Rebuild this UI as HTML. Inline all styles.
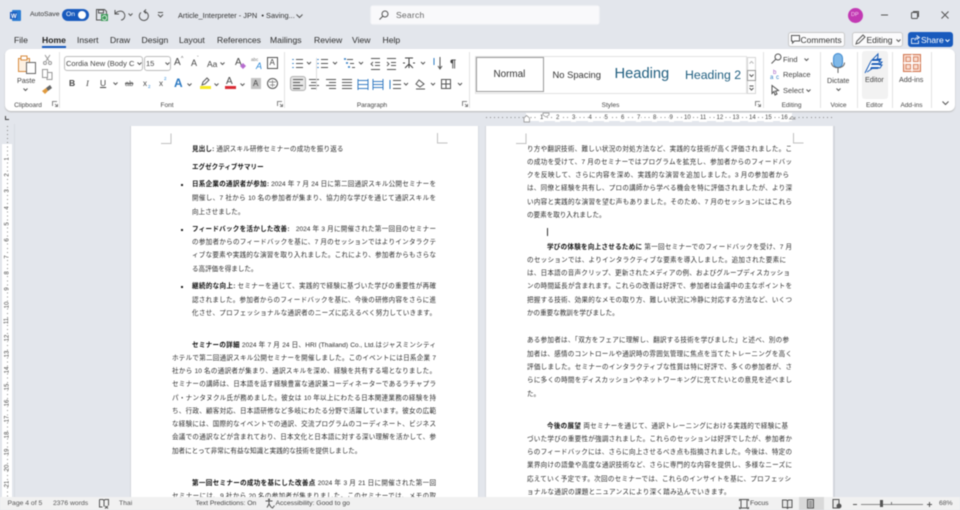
<!DOCTYPE html>
<html lang="ja"><head><meta charset="utf-8"><title>Word</title>
<style>
*{box-sizing:border-box}
html,body{margin:0;padding:0}
body{width:960px;height:510px;overflow:hidden;position:relative;background:#e3e6ec;font-family:"Liberation Sans","Noto Sans CJK JP",sans-serif;color:#333}
.a{position:absolute;white-space:nowrap;line-height:1}
#ui{position:absolute;left:0;top:0;width:960px;height:510px;filter:blur(.45px)}
.t{position:absolute;font-size:8.6px;top:35px;line-height:10px;color:#2e2e2e;white-space:nowrap}
.g{position:absolute;font-size:6.5px;top:101.5px;line-height:8px;color:#444;white-space:nowrap;transform:translateX(-50%)}
.sep{position:absolute;top:52px;height:56px;width:1px;background:#e2e2e2}
.page{position:absolute;top:126px;height:371px;width:347px;background:#fff}
.l{position:absolute;height:11px;line-height:11px;font-size:6.55px;color:#2a2a2a;overflow:hidden;text-align:left;margin-top:.5px;font-family:"Liberation Sans","Noto Sans CJK JP",sans-serif}
.j{text-align:justify;text-align-last:justify;text-justify:inter-character}
.L{left:172px;width:264px}.B{left:192px;width:244px}.R{left:527px;width:265px}
.l b{color:#111;font-weight:700}
svg{position:absolute;overflow:visible}
.dot{position:absolute;left:181px;width:2px;height:2px;background:#222}
.rn{position:absolute;font-size:6px;color:#444;line-height:6px;background:#fff}
#tr span{background:#fff;padding:0 1px;margin-left:-1px}
.s{fill:none;stroke:#555;stroke-width:1}
</style></head><body>
<div id="ui">
<!-- title bar -->
<svg style="left:10px;top:10px" width="11" height="11"><rect x="2" y="0" width="9" height="11" rx="1" fill="#2b7cd3"/><rect y="2" width="7" height="7" fill="#185abd"/><text x="1" y="8" font-size="6" font-weight="700" fill="#fff" font-family="Liberation Sans">W</text></svg>
<div class="a" style="left:30px;top:12px;font-size:6.8px;color:#333">AutoSave</div>
<div class="a" style="left:61.500px;top:8.500px;width:27px;height:12px;border-radius:6px;background:#185abd"></div>
<div class="a" style="left:66px;top:11.500px;font-size:6.800px;color:#fff">On</div>
<div class="a" style="left:78px;top:10.500px;width:8px;height:8px;border-radius:50%;background:#fff"></div>
<svg style="left:96px;top:9px" width="12" height="12"><path d="M.5.500h8l2 2v8.500h-10z" class="s"/><rect x="2.500" y="1" width="5" height="3" class="s"/><rect x="5" y="5" width="7" height="7" fill="#3d9a5a"/><path d="M6.500 8.500a2 2 0 0 1 4 0M10.500 8.500a2 2 0 0 1-4 1" stroke="#fff" fill="none" stroke-width=".8"/></svg>
<svg style="left:114px;top:9px" width="12" height="12"><path d="M1 1v4h4M1 5c2-3 7-4 9-1s0 7-3 7" class="s"/></svg>
<svg style="left:128px;top:13px" width="5" height="4"><path d="M.5.500 2.500 2.500 4.500.5" class="s"/></svg>
<svg style="left:138px;top:9px" width="11" height="12"><path d="M8 .5 6 2.500 8 4.500M6 2.500a4.500 4.500 0 1 1-3 1" class="s"/></svg>
<svg style="left:157px;top:12px" width="7" height="6"><path d="M1 .5h5M1 2.500 3.500 5 6 2.500" class="s"/></svg>
<div class="a" style="left:178px;top:11.500px;font-size:7.400px;color:#333">Article_Interpreter - JPN &nbsp;•&nbsp;Saving...</div>
<svg style="left:296px;top:13.500px" width="7" height="4"><path d="M.5.500 3.500 3.500 6.500.5" class="s"/></svg>
<div class="a" style="left:370px;top:5px;width:230px;height:20px;background:#f9f9fb;border:1px solid #eceef2;border-radius:3px"></div>
<svg style="left:379px;top:10px" width="10" height="10"><circle cx="6" cy="4" r="3" class="s"/><path d="M4 6 .5 9.500" class="s"/></svg>
<div class="a" style="left:396px;top:10.500px;font-size:8.600px;color:#666;letter-spacing:.2px">Search</div>
<div class="a" style="left:847.500px;top:7.500px;width:15px;height:15px;border-radius:50%;background:#c239b3"></div>
<div class="a" style="left:851px;top:12.500px;font-size:5.500px;color:#f6d5f2">DP</div>
<svg style="left:881px;top:10px" width="70" height="10"><path d="M0 5h7" stroke="#555"/><rect x="30.500" y="2.500" width="6" height="6" rx="1" class="s"/><path d="M32 1.500h5.500v5.500" class="s"/><path d="M60.500 1.500 67.500 8.500M67.500 1.500 60.500 8.500" class="s"/></svg>
<!-- tabs -->
<div class="t" style="left:14px">File</div>
<div class="t" style="left:42px;font-weight:700;color:#222">Home</div>
<div class="a" style="left:42px;top:46px;width:24px;height:1.500px;background:#185abd"></div>
<div class="t" style="left:77px">Insert</div>
<div class="t" style="left:110px">Draw</div>
<div class="t" style="left:141.500px">Design</div>
<div class="t" style="left:179px">Layout</div>
<div class="t" style="left:217px">References</div>
<div class="t" style="left:270px">Mailings</div>
<div class="t" style="left:314px">Review</div>
<div class="t" style="left:352px">View</div>
<div class="t" style="left:382.500px">Help</div>
<!-- right buttons -->
<div class="a" style="left:788px;top:32px;width:57px;height:15px;background:#fbfbfc;border:1px solid #c8c8c8;border-radius:3px"></div>
<svg style="left:791px;top:35px" width="9" height="9"><path d="M.5.500h8v5.500h-5l-2 2v-2h-1z" class="s"/></svg>
<div class="a" style="left:800.500px;top:35.500px;font-size:8.500px;color:#333">Comments</div>
<div class="a" style="left:852px;top:32px;width:51px;height:15px;background:#fbfbfc;border:1px solid #c8c8c8;border-radius:3px"></div>
<svg style="left:855px;top:34px" width="11" height="11"><path d="M1 10 2 7 8 1l2 2-6 6z" class="s"/></svg>
<div class="a" style="left:866.500px;top:35.500px;font-size:8.500px;color:#333">Editing</div>
<svg style="left:896px;top:39px" width="5" height="3"><path d="M.5.500 2.500 2.500 4.500.5" class="s"/></svg>
<div class="a" style="left:908px;top:32px;width:44.500px;height:15px;background:#185abd;border-radius:3px"></div>
<svg style="left:911px;top:35px" width="9" height="9"><path d="M.5 3.500h3M.5 3.500v5h7v-3M4 5.500c0-2 1-3 3-3M5.500 .5l3 2-3 2" stroke="#fff" fill="none" stroke-width=".8"/></svg>
<div class="a" style="left:921px;top:35.500px;font-size:8.500px;color:#fff">Share</div>
<svg style="left:945px;top:39px" width="5" height="3"><path d="M.5.500 2.500 2.500 4.500.5" stroke="#fff" fill="none"/></svg>
<!-- ribbon -->
<div class="a" style="left:5px;top:49px;width:950px;height:62px;background:#fff;border-radius:6px;box-shadow:0 1px 1.500px #b8b8b8"></div>
<div class="sep" style="left:59px"></div><div class="sep" style="left:284px"></div><div class="sep" style="left:469px"></div><div class="sep" style="left:763px"></div><div class="sep" style="left:820px"></div><div class="sep" style="left:857px"></div><div class="sep" style="left:892px"></div><div class="sep" style="left:931px"></div>
<!-- clipboard -->
<svg style="left:18px;top:55px" width="19" height="19"><rect x=".5" y="3.500" width="11" height="13" fill="#fdf1e3" stroke="#d88b3c"/><rect x="3" y="1" width="6" height="4" fill="#fff" stroke="#d88b3c"/><rect x="8.500" y="7.500" width="9" height="11" fill="#fff" stroke="#666"/></svg>
<div class="a" style="left:17px;top:77px;font-size:7.200px;color:#444">Paste</div>
<svg style="left:23px;top:88px" width="5" height="3"><path d="M.5.500 2.500 2.500 4.500.5" class="s"/></svg>
<svg style="left:43px;top:54px" width="9" height="11"><path d="M2 1 6 7M7 1 3 7" stroke="#999" fill="none"/><circle cx="2" cy="9" r="1.500" class="s" style="stroke:#999"/><circle cx="7" cy="9" r="1.500" class="s" style="stroke:#999"/></svg>
<svg style="left:42px;top:69px" width="11" height="11"><path d="M.5.500h5v8h-5zM5.500 3.500h4.500v7h-5v-2" fill="none" stroke="#999"/></svg>
<svg style="left:42px;top:84px" width="11" height="11"><path d="M4 4 8 1l2 3-4 3z" fill="#666"/><path d="M4 4 6 7 3 10 0 7z" fill="#e09a3e"/></svg>
<div class="g" style="left:28px">Clipboard</div>
<svg style="left:52px;top:101px" width="6" height="6"><path d="M.5 5V.5H5M3 3l2.500 2.500M5.500 3v2.500H3" fill="none" stroke="#666" stroke-width=".8"/></svg>
<!-- font -->
<div class="a" style="left:64px;top:56px;width:79px;height:15px;border:1px solid #bdbdbd;border-radius:3px"></div>
<div class="a" style="left:66px;top:60px;font-size:7.500px;color:#444">Cordia New (Body C</div>
<svg style="left:137px;top:62px" width="5" height="3"><path d="M.5.500 2.500 2.500 4.500.5" class="s"/></svg>
<div class="a" style="left:144px;top:56px;width:27px;height:15px;border:1px solid #bdbdbd;border-radius:3px"></div>
<div class="a" style="left:146px;top:60px;font-size:7.500px;color:#444">15</div>
<svg style="left:165px;top:62px" width="5" height="3"><path d="M.5.500 2.500 2.500 4.500.5" class="s"/></svg>
<div class="a" style="left:174px;top:58px;font-size:10px;color:#444">A</div><div class="a" style="left:181px;top:57px;font-size:5px;color:#555">^</div>
<div class="a" style="left:191px;top:59px;font-size:9px;color:#444">A</div><div class="a" style="left:197px;top:57px;font-size:5px;color:#555">ˇ</div>
<div class="a" style="left:207px;top:59.500px;font-size:8.500px;color:#444">Aa</div>
<svg style="left:220px;top:62px" width="5" height="3"><path d="M.5.500 2.500 2.500 4.500.5" class="s"/></svg>
<div class="a" style="left:235px;top:58px;font-size:10px;color:#444">A</div>
<svg style="left:240px;top:63px" width="6" height="6"><path d="M0 3 3 0l3 3-3 3z" fill="#b66ccf"/></svg>
<div class="a" style="left:251px;top:58px;font-size:4.500px;color:#777">abc</div><div class="a" style="left:256px;top:62px;font-size:9px;color:#2b88d8;font-style:italic">A</div>
<div class="a" style="left:267px;top:57px;width:11px;height:12px;border:1px solid #555"></div><div class="a" style="left:269.500px;top:59px;font-size:8px;color:#444">A</div>
<div class="a" style="left:69px;top:79px;font-size:8.500px;font-weight:700;color:#444">B</div>
<div class="a" style="left:86px;top:79px;font-size:8.500px;font-style:italic;font-family:'Liberation Serif';color:#444">I</div>
<div class="a" style="left:100px;top:79px;font-size:8.500px;text-decoration:underline;color:#444">U</div>
<svg style="left:113px;top:82px" width="5" height="3"><path d="M.5.500 2.500 2.500 4.500.5" class="s"/></svg>
<div class="a" style="left:125px;top:80px;font-size:7.500px;text-decoration:line-through;color:#555">ab</div>
<div class="a" style="left:143px;top:80px;font-size:8px;color:#444">x</div><div class="a" style="left:148px;top:85px;font-size:4.500px;color:#2b88d8">2</div>
<div class="a" style="left:159px;top:80px;font-size:8px;color:#444">x</div><div class="a" style="left:164px;top:77px;font-size:4.500px;color:#2b88d8">2</div>
<div class="a" style="left:174px;top:77px;font-size:12px;font-weight:700;color:#2b79c2">A</div>
<svg style="left:187px;top:83px" width="5" height="3"><path d="M.5.500 2.500 2.500 4.500.5" class="s"/></svg>
<svg style="left:201px;top:77px" width="10" height="9"><path d="M1 8 2 5 6 1l2 2-4 4z" class="s"/></svg>
<div class="a" style="left:200px;top:86px;width:10.500px;height:3px;background:#f6e925"></div>
<svg style="left:214px;top:83px" width="5" height="3"><path d="M.5.500 2.500 2.500 4.500.5" class="s"/></svg>
<div class="a" style="left:226px;top:77px;font-size:10px;color:#444">A</div>
<div class="a" style="left:225px;top:86px;width:11px;height:3px;background:#d92b35"></div>
<svg style="left:240px;top:83px" width="5" height="3"><path d="M.5.500 2.500 2.500 4.500.5" class="s"/></svg>
<div class="a" style="left:251px;top:78px;width:10px;height:11px;background:#c4c4c4"></div><div class="a" style="left:253px;top:80px;font-size:8px;color:#444">A</div>
<svg style="left:267px;top:78px" width="11" height="11"><circle cx="5.500" cy="5.500" r="5" class="s"/><path d="M2 4h7M5.500 2v7M3 7h5" stroke="#777" fill="none" stroke-width=".7"/></svg>
<div class="g" style="left:167px">Font</div>
<svg style="left:277px;top:101px" width="6" height="6"><path d="M.5 5V.5H5M3 3l2.500 2.500M5.500 3v2.500H3" fill="none" stroke="#666" stroke-width=".8"/></svg>
<!-- paragraph -->
<svg style="left:290px;top:56px" width="180" height="36" stroke="#555" fill="none">
<path d="M3 3v1M3 7v1M3 11v1" stroke="#2b79c2" stroke-width="1.500"/><path d="M6 3.500h7M6 7.500h7M6 11.500h7"/><path d="M17 6l2 2 2-2"/>
<path d="M28 3v1M28 7v1M28 11v1" stroke="#2b79c2" stroke-width="1.500"/><path d="M31 3.500h7M31 7.500h7M31 11.500h7"/><path d="M43 6l2 2 2-2"/>
<path d="M54 3h2M56 7h2M58 11h2" stroke="#2b79c2" stroke-width="1.500"/><path d="M57 3.500h6M60 7.500h4M62 11.500h3"/><path d="M69 6l2 2 2-2"/>
<path d="M81 2.500h9M85 6.500h5M85 9.500h5M81 13.500h9M83 6l-2 2 2 2" stroke-width=".9"/>
<path d="M97 2.500h9M101 6.500h5M101 9.500h5M97 13.500h9M97 6l2 2-2 2" stroke-width=".9"/>
<path d="M115 2l8 0M119 2v10M115 12l4-4 4 4M113 7h2M123 7h2" stroke="#444"/><path d="M131 6l2 2 2-2"/>
<path d="M144 2v7M144 11v0" stroke="#2b79c2"/><path d="M150 1v11M148 10l2 3 2-3"/>
<text x="160" y="11" font-size="11" fill="#444" stroke="none" font-family="Liberation Sans" font-weight="700">¶</text>
</svg>
<div class="a" style="left:289.500px;top:76px;width:16px;height:15px;background:#e6e6e6;border:1px solid #b0b0b0;border-radius:3px"></div>
<svg style="left:292px;top:78px" width="180" height="14" stroke="#555" fill="none">
<path d="M1 1.500h10M1 4.500h7M1 7.500h10M1 10.500h7"/>
<path d="M17 1.500h10M19 4.500h6M17 7.500h10M19 10.500h6"/>
<path d="M34 1.500h10M37 4.500h7M34 7.500h10M37 10.500h7"/>
<path d="M50 1.500h10M50 4.500h10M50 7.500h10M50 10.500h10"/>
<path d="M66 1v11M76 1v11M66 2.500h10M66 6.500h10M66 10.500h10" stroke="#3a7fc4"/>
<path d="M81 1v11M91 1v11M81 3.500h10M81 6.500h10M81 9.500h10" stroke="#3a7fc4"/>
<path d="M98 2v9" stroke="#2b79c2"/><path d="M101 2.500h8M101 6.500h8M101 10.500h8"/><path d="M112 5l2 2 2-2"/>
<path d="M127 2l5 4-4 3-4-3zM124 11h9" stroke="#555"/><path d="M139 5l2 2 2-2"/>
<rect x="149.500" y="1.500" width="9" height="9"/><path d="M154 1.500v9M149.500 6h9"/><path d="M166 5l2 2 2-2"/>
</svg>
<div class="a" style="left:316px;top:58px;width:1px;height:32px;background:#ddd"></div>
<div class="g" style="left:372px">Paragraph</div>
<svg style="left:462px;top:101px" width="6" height="6"><path d="M.5 5V.5H5M3 3l2.500 2.500M5.500 3v2.500H3" fill="none" stroke="#666" stroke-width=".8"/></svg>
<!-- styles -->
<div class="a" style="left:475px;top:56px;width:272px;height:38px;border:1px solid #e2e2e2;background:#fff"></div>
<div class="a" style="left:476px;top:57px;width:68px;height:35px;border:1px solid #9a9a9a"></div>
<div class="a" style="left:493.500px;top:70px;font-size:9.900px;color:#333">Normal</div>
<div class="a" style="left:552.500px;top:70px;font-size:9.400px;color:#333">No Spacing</div>
<div class="a" style="left:614.500px;top:67px;font-size:14.700px;color:#215f80">Heading</div>
<div class="a" style="left:685px;top:68.500px;font-size:12.300px;color:#215f80">Heading 2</div>
<div class="a" style="left:747px;top:57px;width:9px;height:37px;border:1px solid #d6d6d6;background:#fff"></div>
<div class="a" style="left:747px;top:70px;width:9px;height:11px;border:1px solid #9a9a9a;background:#fff"></div>
<svg style="left:749px;top:61px" width="5" height="30"><path d="M.5 2.500 2.500.5 4.500 2.500" stroke="#bbb" fill="none"/><path d="M.5 13.500 2.500 15.500 4.500 13.500" class="s"/><path d="M.5 25h4M.5 27 2.500 29 4.500 27" class="s"/></svg>
<div class="g" style="left:610.500px">Styles</div>
<svg style="left:755px;top:101px" width="6" height="6"><path d="M.5 5V.5H5M3 3l2.500 2.500M5.500 3v2.500H3" fill="none" stroke="#666" stroke-width=".8"/></svg>
<!-- editing -->
<svg style="left:771px;top:53px" width="11" height="11"><circle cx="7" cy="4" r="3" class="s"/><path d="M5 6 .5 10.500" class="s"/></svg>
<div class="a" style="left:783px;top:55.500px;font-size:7.500px;color:#444">Find</div>
<svg style="left:804px;top:58px" width="5" height="3"><path d="M.5.500 2.500 2.500 4.500.5" class="s"/></svg>
<svg style="left:770px;top:69px" width="11" height="11"><text x="3" y="5" font-size="6" fill="#a45bc4" font-family="Liberation Sans">b</text><text x="0" y="10" font-size="6" fill="#2b79c2" font-family="Liberation Sans">a</text><text x="6" y="10" font-size="6" fill="#2b79c2" font-family="Liberation Sans">c</text></svg>
<div class="a" style="left:783px;top:71px;font-size:7.500px;color:#444">Replace</div>
<svg style="left:771px;top:85px" width="9" height="11"><path d="M1 .5v8l2-2 1 3.500 2-1-1.500-3 3-.5z" class="s"/></svg>
<div class="a" style="left:783px;top:87px;font-size:7.500px;color:#444">Select</div>
<svg style="left:806px;top:89px" width="5" height="3"><path d="M.5.500 2.500 2.500 4.500.5" class="s"/></svg>
<div class="g" style="left:791.500px">Editing</div>
<!-- dictate -->
<svg style="left:830px;top:53px" width="16" height="20"><rect x="3.500" y=".5" width="9" height="14" rx="4.500" fill="#7fb8e8" stroke="#3f8ad0"/><path d="M1.500 9.500c0 7 13 7 13 0M8 15v5" stroke="#666" fill="none"/></svg>
<div class="a" style="left:827px;top:77px;font-size:7.200px;color:#444">Dictate</div>
<svg style="left:836px;top:88px" width="5" height="3"><path d="M.5.500 2.500 2.500 4.500.5" class="s"/></svg>
<div class="g" style="left:838.500px">Voice</div>
<!-- editor -->
<div class="a" style="left:862px;top:51px;width:26px;height:48px;background:#f2f2f2;border-radius:3px"></div>
<svg style="left:864px;top:53px" width="22" height="21"><path d="M1 20 7 8 14 1c0 3 0 4-1 5h4l-2 3h3l-2 3h2l-2 3H9L3 19" fill="#fff" stroke="#1d5fb8"/><path d="M9 6h8l-1 2H8zM8 10h9l-1 2H7zM7 14h8l-1 2H6z" fill="#1d5fb8"/></svg>
<div class="a" style="left:865px;top:76px;font-size:7.200px;color:#444">Editor</div>
<div class="g" style="left:874.500px">Editor</div>
<!-- addins -->
<svg style="left:903px;top:54px" width="18" height="18"><rect x=".5" y=".5" width="17" height="17" fill="#f9ddd1" stroke="#d0734c"/><path d="M9 .5v17M.5 9h17" stroke="#fff" stroke-width="1.500"/><path d="M3 3h4.500v4.500H3zM10.500 3H15v4.500h-4.500zM3 10.500h4.500V15H3zM10.500 10.500H15V15h-4.500z" fill="none" stroke="#d0734c" stroke-width=".8"/></svg>
<div class="a" style="left:899px;top:76px;font-size:7.200px;color:#444">Add-ins</div>
<div class="g" style="left:911.500px">Add-ins</div>
<svg style="left:942px;top:101px" width="7" height="4"><path d="M.5.500 3.500 3.500 6.500.5" class="s"/></svg>

<!-- doc area -->
<div class="a" style="left:14px;top:113px;width:946px;height:384px;background:#e3e6ec"></div>
<div class="a" style="left:14px;top:124px;width:1px;height:373px;background:#d8dbe1"></div>
<div class="page" style="left:131px"></div>
<div class="page" style="left:486px"></div>
<div class="a" style="left:129.500px;top:126px;width:1.500px;height:371px;background:#d3d6dc"></div>
<div class="a" style="left:478px;top:126px;width:1px;height:371px;background:#d8dbe1"></div>
<div class="a" style="left:485px;top:126px;width:1px;height:371px;background:#d3d6dc"></div>
<div class="a" style="left:833px;top:126px;width:1.500px;height:371px;background:#d3d6dc"></div>
<!-- crop marks -->
<svg style="left:0;top:0" width="960" height="510" stroke="#c0c0c0" fill="none"><path d="M161 143.500h10v-10M437.500 133v10h10M516 143.500h10v-10M793.500 133v10h10"/></svg>
<!-- top ruler -->
<div class="a" style="left:526px;top:113px;width:266px;height:7.500px;background:#fff"></div>
<div class="a" style="left:486px;top:117px;width:347px;height:1px;background:repeating-linear-gradient(90deg,#888 0 1px,transparent 1px 4.060px)"></div>
<div class="a" style="left:526px;top:114px;width:266px;height:8px;font-size:6px;line-height:8px;color:#444" id="tr">
<span class="a" style="left:14px;top:0;line-height:8px">1</span><span class="a" style="left:30px;top:0;line-height:8px">2</span><span class="a" style="left:46px;top:0;line-height:8px">3</span><span class="a" style="left:62.500px;top:0;line-height:8px">4</span><span class="a" style="left:78.500px;top:0;line-height:8px">5</span><span class="a" style="left:95px;top:0;line-height:8px">6</span><span class="a" style="left:111px;top:0;line-height:8px">7</span><span class="a" style="left:127px;top:0;line-height:8px">8</span><span class="a" style="left:143.500px;top:0;line-height:8px">9</span><span class="a" style="left:158px;top:0;line-height:8px">10</span><span class="a" style="left:174px;top:0;line-height:8px">11</span><span class="a" style="left:190.500px;top:0;line-height:8px">12</span><span class="a" style="left:206.500px;top:0;line-height:8px">13</span><span class="a" style="left:223px;top:0;line-height:8px">14</span><span class="a" style="left:239px;top:0;line-height:8px">15</span><span class="a" style="left:255px;top:0;line-height:8px">16</span>
</div>
<svg style="left:0;top:0" width="960" height="510" fill="#fff" stroke="#888" stroke-width=".7"><path d="M524 118l2.500-2.500 3 2.500v4h-5.500zM543 113h6v2l-3 2-3-2zM789.500 119l2.500-2.500 3 2.500z"/></svg>
<!-- vertical ruler -->
<div class="a" style="left:2px;top:144px;width:10px;height:353px;background:#fff"></div>
<div class="a" style="left:5px;top:116px;width:4px;height:4px;border-left:1.500px solid #444;border-bottom:1.500px solid #444"></div>
<div class="a" style="left:7px;top:126px;width:1px;height:371px;background:repeating-linear-gradient(180deg,#888 0 1px,transparent 1px 4.060px)"></div>
<div style="position:absolute;left:3px;top:0;width:9px;height:497px;overflow:hidden" id="vr">
<span class="rn" style="left:2.500px;top:156px;transform:rotate(-90deg)">1</span><span class="rn" style="left:2.500px;top:172px;transform:rotate(-90deg)">2</span><span class="rn" style="left:2.500px;top:188px;transform:rotate(-90deg)">3</span><span class="rn" style="left:2.500px;top:205px;transform:rotate(-90deg)">4</span><span class="rn" style="left:2.500px;top:221px;transform:rotate(-90deg)">5</span><span class="rn" style="left:2.500px;top:237px;transform:rotate(-90deg)">6</span><span class="rn" style="left:2.500px;top:254px;transform:rotate(-90deg)">7</span><span class="rn" style="left:2.500px;top:270px;transform:rotate(-90deg)">8</span><span class="rn" style="left:2.500px;top:286px;transform:rotate(-90deg)">9</span><span class="rn" style="left:1px;top:302px;transform:rotate(-90deg)">10</span><span class="rn" style="left:1px;top:318px;transform:rotate(-90deg)">11</span><span class="rn" style="left:1px;top:335px;transform:rotate(-90deg)">12</span><span class="rn" style="left:1px;top:351px;transform:rotate(-90deg)">13</span><span class="rn" style="left:1px;top:367px;transform:rotate(-90deg)">14</span><span class="rn" style="left:1px;top:384px;transform:rotate(-90deg)">15</span><span class="rn" style="left:1px;top:400px;transform:rotate(-90deg)">16</span><span class="rn" style="left:1px;top:416px;transform:rotate(-90deg)">17</span><span class="rn" style="left:1px;top:432px;transform:rotate(-90deg)">18</span><span class="rn" style="left:1px;top:449px;transform:rotate(-90deg)">19</span><span class="rn" style="left:1px;top:465px;transform:rotate(-90deg)">20</span><span class="rn" style="left:1px;top:481px;transform:rotate(-90deg)">21</span>
</div>

<!-- left page text -->
<div class="l" style="left:192px;width:244px;top:143.500px;letter-spacing:.15px"><b>見出し:</b> 通訳スキル研修セミナーの成功を振り返る</div>
<div class="l" style="left:192px;width:244px;top:161.500px"><b>エグゼクティブサマリー</b></div>
<div class="dot" style="top:184px"></div>
<div class="l B j" style="top:178.500px"><b>日系企業の通訳者が参加:</b> 2024 年 7 月 24 日に第二回通訳スキル公開セミナーを</div>
<div class="l B j" style="top:192.500px">開催し、7 社から 10 名の参加者が集まり、協力的な学びを通じて通訳スキルを</div>
<div class="l B" style="top:206px">向上させました。</div>
<div class="dot" style="top:229px"></div>
<div class="l B j" style="top:223.500px"><b>フィードバックを活かした改善:</b> &nbsp; 2024 年 3 月に開催された第一回目のセミナー</div>
<div class="l B j" style="top:236.500px">の参加者からのフィードバックを基に、7 月のセッションではよりインタラクテ</div>
<div class="l B j" style="top:249.500px">ィブな要素や実践的な演習を取り入れました。これにより、参加者からもさらな</div>
<div class="l B" style="top:263px">る高評価を得ました。</div>
<div class="dot" style="top:286px"></div>
<div class="l B j" style="top:280.500px"><b>継続的な向上:</b> セミナーを通じて、実践的で経験に基づいた学びの重要性が再確</div>
<div class="l B j" style="top:294.500px">認されました。参加者からのフィードバックを基に、今後の研修内容をさらに進</div>
<div class="l B j" style="top:307.500px">化させ、プロフェッショナルな通訳者のニーズに応えるべく努力していきます。</div>
<div class="l B j" style="top:339.500px"><b>セミナーの詳細</b> 2024 年 7 月 24 日、HRI (Thailand) Co., Ltd.はジャスミンシティ</div>
<div class="l L j" style="top:352.500px">ホテルで第二回通訳スキル公開セミナーを開催しました。このイベントには日系企業 7</div>
<div class="l L j" style="top:365.500px">社から 10 名の通訳者が集まり、通訳スキルを深め、経験を共有する場となりました。</div>
<div class="l L j" style="top:378.500px">セミナーの講師は、日本語を話す経験豊富な通訳兼コーディネーターであるラチャプラ</div>
<div class="l L j" style="top:392.500px">パ・ナンタヌクル氏が務めました。彼女は 10 年以上にわたる日本関連業務の経験を持</div>
<div class="l L j" style="top:405.500px">ち、行政、顧客対応、日本語研修など多岐にわたる分野で活躍しています。彼女の広範</div>
<div class="l L j" style="top:418.500px">な経験には、国際的なイベントでの通訳、交流プログラムのコーディネート、ビジネス</div>
<div class="l L j" style="top:431.500px">会議での通訳などが含まれており、日本文化と日本語に対する深い理解を活かして、参</div>
<div class="l L" style="top:445px">加者にとって非常に有益な知識と実践的な技術を提供しました。</div>
<div class="l B j" style="top:477.500px"><b>第一回セミナーの成功を基にした改善点</b> 2024 年 3 月 21 日に開催された第一回</div>
<div class="l L j" style="top:490.500px">セミナーには、9 社から 20 名の参加者が集まりました。このセミナーでは、メモの取</div>

<!-- right page text -->
<div class="l R j" style="top:143.500px">り方や翻訳技術、難しい状況の対処方法など、実践的な技術が高く評価されました。こ</div>
<div class="l R j" style="top:156.500px">の成功を受けて、7 月のセミナーではプログラムを拡充し、参加者からのフィードバッ</div>
<div class="l R" style="top:169.500px;width:262px;text-align:justify;text-align-last:justify">クを反映して、さらに内容を深め、実践的な演習を追加しました。3 月の参加者から</div>
<div class="l R j" style="top:182.500px">は、同僚と経験を共有し、プロの講師から学べる機会を特に評価されましたが、より深</div>
<div class="l R j" style="top:196.500px">い内容と実践的な演習を望む声もありました。そのため、7 月のセッションにはこれら</div>
<div class="l R" style="top:209.500px">の要素を取り入れました。</div>
<div class="a" style="left:547px;top:227.500px;width:1px;height:8px;background:#333"></div>
<div class="l" style="left:547px;width:245px;top:241.500px;text-align:justify;text-align-last:justify"><b>学びの体験を向上させるために</b> 第一回セミナーでのフィードバックを受け、7 月</div>
<div class="l R" style="top:254.500px;width:259px;text-align:justify;text-align-last:justify">のセッションでは、よりインタラクティブな要素を導入しました。追加された要素に</div>
<div class="l R" style="top:267.500px;width:263px;text-align:justify;text-align-last:justify">は、日本語の音声クリップ、更新されたメディアの例、およびグループディスカッショ</div>
<div class="l R j" style="top:280.500px">ンの時間延長が含まれます。これらの改善は好評で、参加者は会議中の主なポイントを</div>
<div class="l R j" style="top:294.500px">把握する技術、効果的なメモの取り方、難しい状況に冷静に対応する方法など、いくつ</div>
<div class="l R" style="top:307.500px">かの重要な教訓を学びました。</div>
<div class="l R" style="top:334.500px;width:262px;text-align:justify;text-align-last:justify">ある参加者は、「双方をフェアに理解し、翻訳する技術を学びました」と述べ、別の参</div>
<div class="l R j" style="top:348px">加者は、感情のコントロールや通訳時の雰囲気管理に焦点を当てたトレーニングを高く</div>
<div class="l R j" style="top:361.500px">評価しました。セミナーのインタラクティブな性質は特に好評で、多くの参加者が、さ</div>
<div class="l R j" style="top:374.500px">らに多くの時間をディスカッションやネットワーキングに充てたいとの意見を述べまし</div>
<div class="l R" style="top:388px">た。</div>
<div class="l" style="left:547px;width:241px;top:420.500px;text-align:justify;text-align-last:justify"><b>今後の展望</b> 両セミナーを通じて、通訳トレーニングにおける実践的で経験に基</div>
<div class="l R j" style="top:433.500px">づいた学びの重要性が強調されました。これらのセッションは好評でしたが、参加者か</div>
<div class="l R j" style="top:446.500px">らのフィードバックには、さらに向上させるべき点も指摘されました。今後は、特定の</div>
<div class="l R j" style="top:459.500px">業界向けの語彙や高度な通訳技術など、さらに専門的な内容を提供し、多様なニーズに</div>
<div class="l R" style="top:473.500px;width:264px;text-align:justify;text-align-last:justify">応えていく予定です。次回のセミナーでは、これらのインサイトを基に、プロフェッシ</div>
<div class="l R" style="top:486px;letter-spacing:.3px">ョナルな通訳の課題とニュアンスにより深く踏み込んでいきます。</div>

<!-- status bar -->
<div class="a" style="left:0;top:497px;width:960px;height:13px;background:#f1f1f1"></div>
<div class="a" style="left:7.500px;top:500.500px;font-size:6.800px;color:#555">Page 4 of 5</div>
<div class="a" style="left:53px;top:500.500px;font-size:6.800px;color:#555">2376 words</div>
<svg style="left:99px;top:499px" width="10" height="10"><path d="M.5.500h3.500l1 1 1-1h3.500v6M5 1.500v6M.5.500v7.500h3" class="s"/><path d="M6 7l3 2.500M9 7 6 9.500" stroke="#555"/></svg>
<div class="a" style="left:119px;top:500.500px;font-size:6.800px;color:#555">Thai</div>
<div class="a" style="left:195.500px;top:500.500px;font-size:6.800px;color:#444">Text Predictions: On</div>
<svg style="left:265px;top:498px" width="10" height="11"><circle cx="4" cy="1.500" r="1" fill="#555"/><path d="M.5 3h7M4 3v3L2 9.500M4 6l2 3" class="s"/><path d="M6 9l1.500 1 2-2.500" stroke="#555" fill="none"/></svg>
<div class="a" style="left:275.500px;top:500.500px;font-size:6.800px;color:#444">Accessibility: Good to go</div>
<svg style="left:739px;top:499px" width="10" height="10"><path d="M2 .5h6v8.500H2z" class="s"/><path d="M.5 2V.5H2M8 .5h1.500V2M.5 8V9.500H2M8 9.500h1.500V8" class="s"/></svg>
<div class="a" style="left:750px;top:500.500px;font-size:6.800px;color:#444">Focus</div>
<div class="a" style="left:799px;top:497px;width:25px;height:13px;background:#d9d9d9"></div>
<svg style="left:782px;top:499px" width="80" height="10"><path d="M.5 1h4l1 1 1-1h3.500v7.500h-3.500l-1 1-1-1h-4zM5.500 2v7" fill="#e8e8e8" stroke="#555"/><rect x="25.500" y=".5" width="6" height="8.500" fill="#c8c8c8" stroke="#555"/><path d="M27 3h3M27 5h3M27 7h3" stroke="#555" stroke-width=".7"/><path d="M51 .5h6v8.500h-6z" fill="#e8e8e8" stroke="#555"/><circle cx="57" cy="7" r="2.500" fill="#555"/></svg>
<div class="a" style="left:853px;top:503.500px;width:4px;height:1px;background:#555"></div>
<div class="a" style="left:861px;top:503.500px;width:62px;height:1px;background:#888"></div>
<div class="a" style="left:880px;top:500px;width:3px;height:7px;background:#555"></div>
<div class="a" style="left:891px;top:502px;width:1px;height:3px;background:#777"></div>
<div class="a" style="left:927px;top:503.500px;width:5px;height:1px;background:#555"></div>
<div class="a" style="left:929px;top:501.500px;width:1px;height:5px;background:#555"></div>
<div class="a" style="left:939px;top:500.500px;font-size:6.800px;color:#555">68%</div>
</div>
</body></html>
